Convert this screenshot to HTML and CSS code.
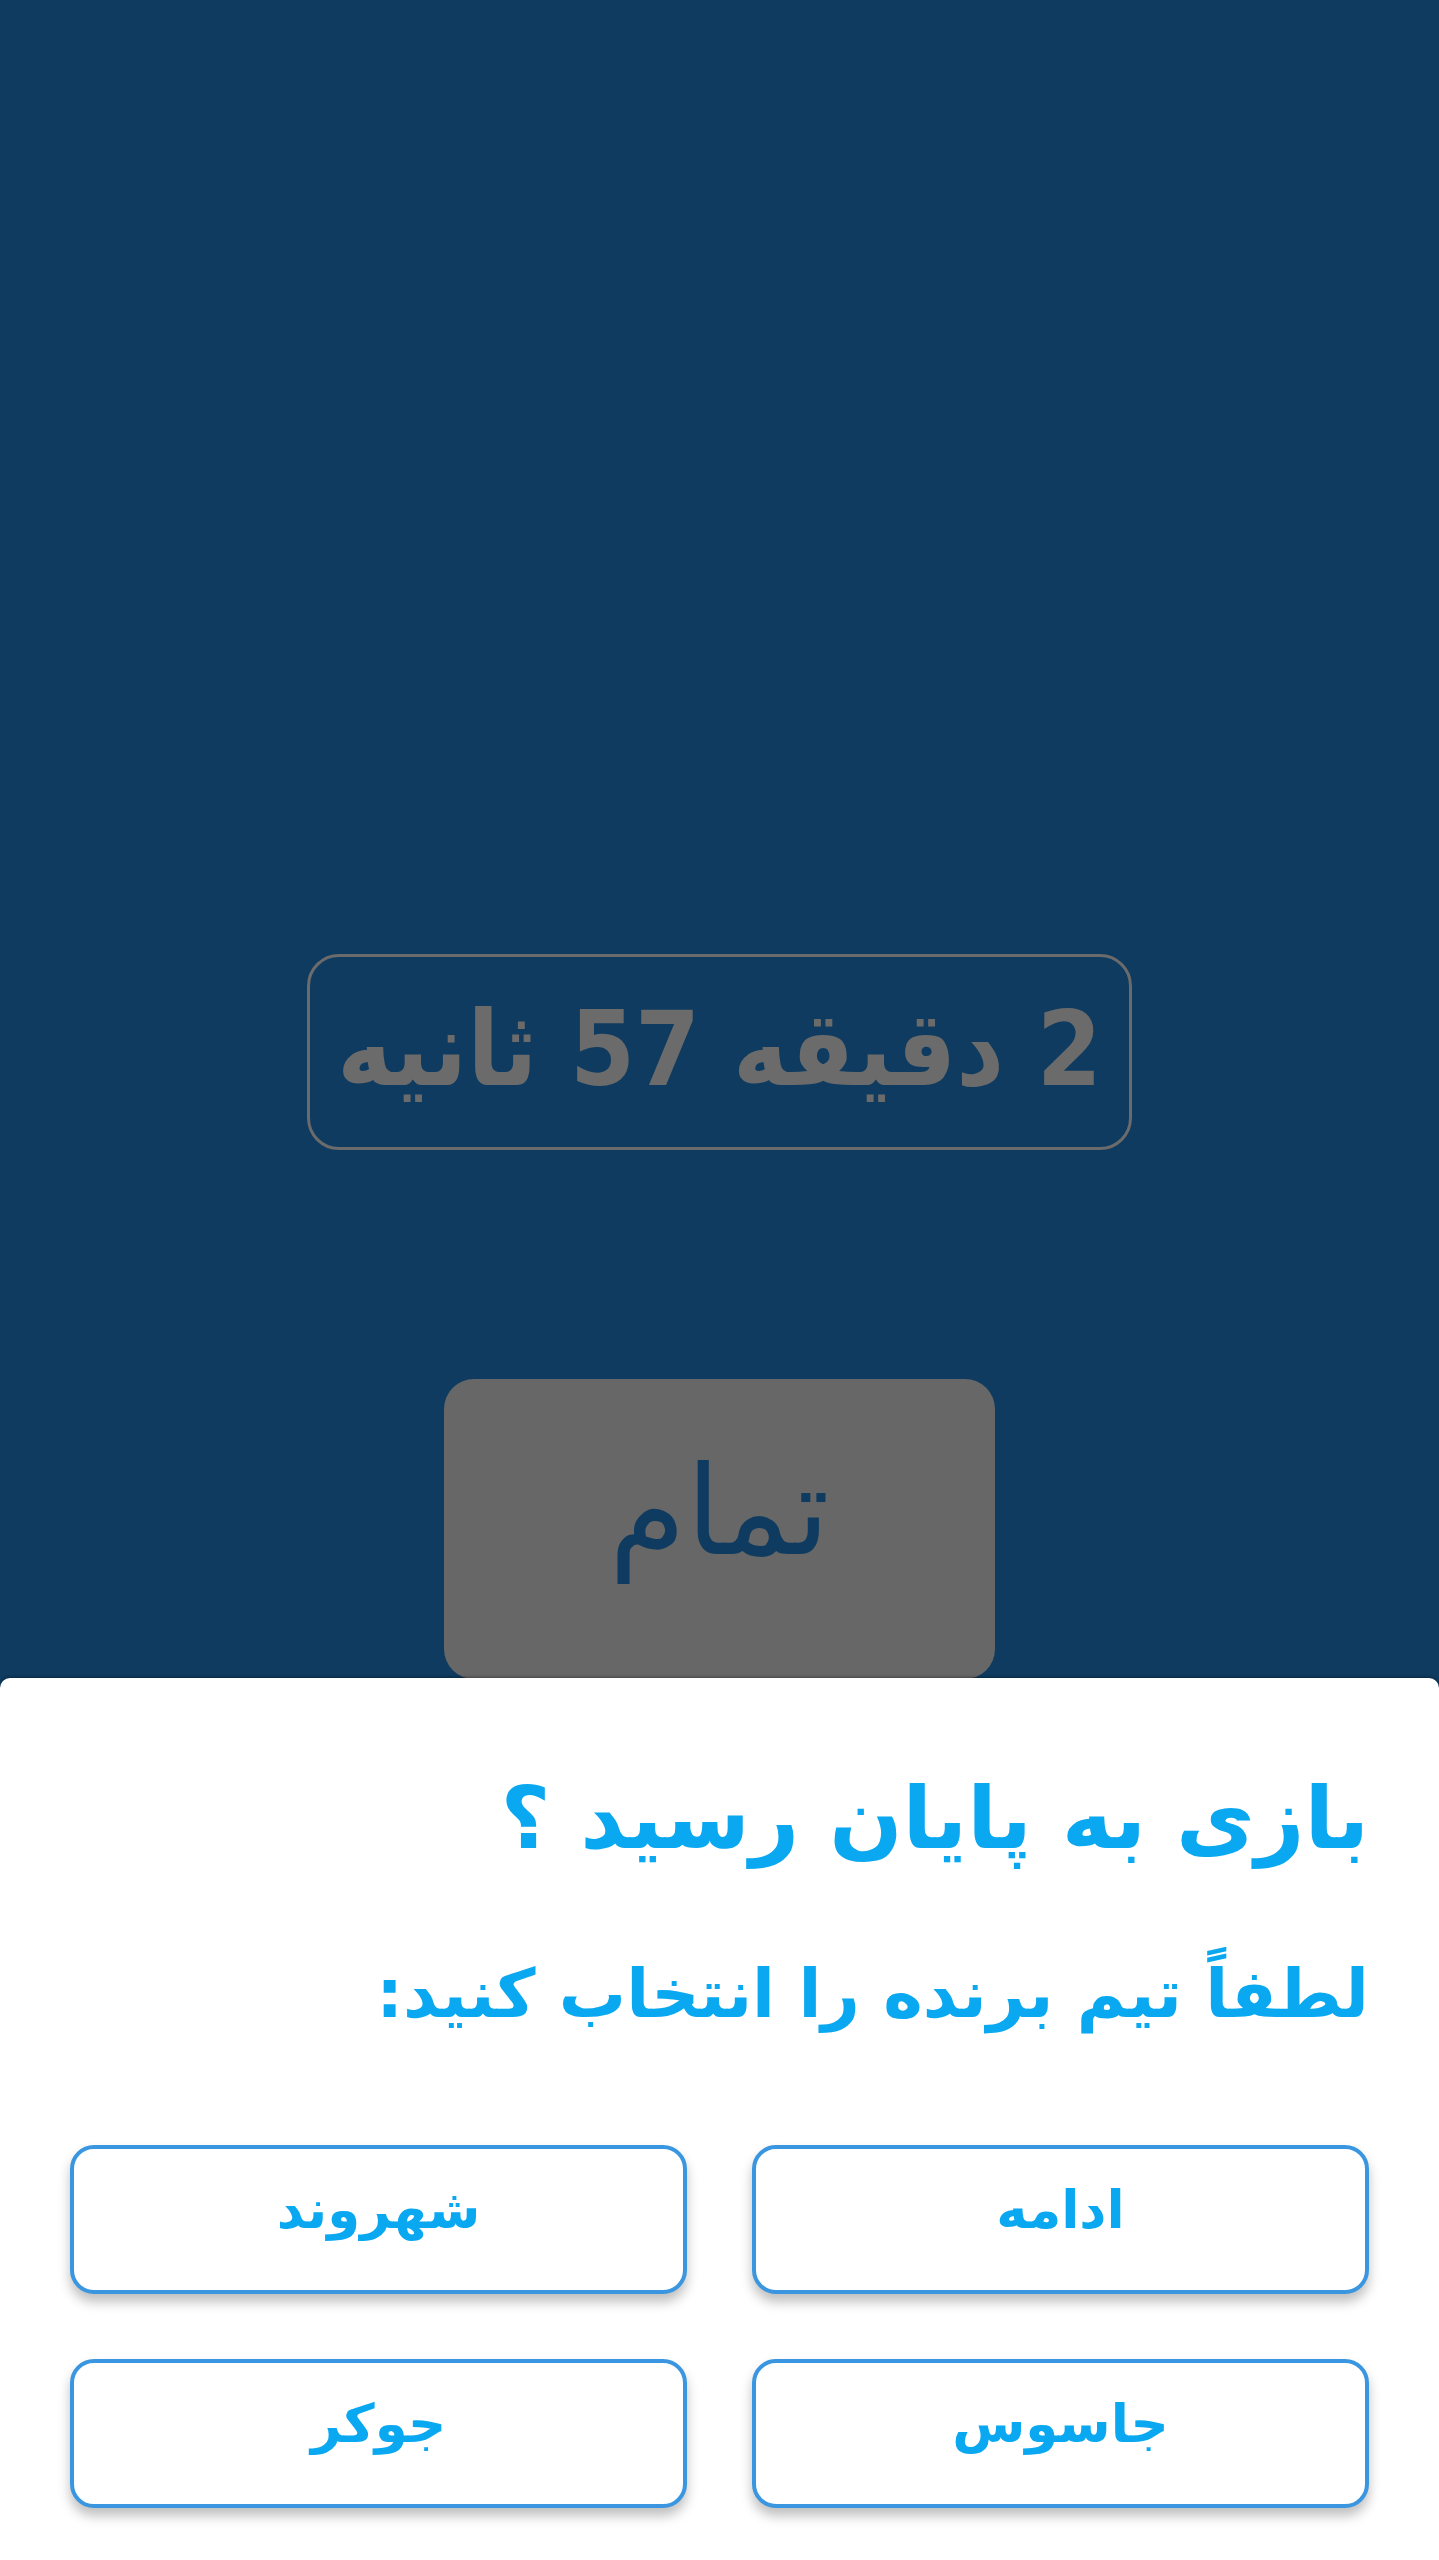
FILE: index.html
```html
<!DOCTYPE html>
<html lang="fa" dir="rtl">
<head>
<meta charset="utf-8">
<title>پایان بازی</title>
<link rel="stylesheet" href="styles.css">
</head>
<body>
<main class="game">
  <div class="timer">2 دقیقه 57 ثانیه</div>
  <button class="finish">تمام</button>
</main>
<section class="sheet">
  <h1 class="sheet-title">بازی به پایان رسید ؟</h1>
  <p class="sheet-sub">لطفاً تیم برنده را انتخاب کنید:</p>
  <div class="choices">
    <button class="choice">ادامه</button>
    <button class="choice">شهروند</button>
    <button class="choice">جاسوس</button>
    <button class="choice">جوکر</button>
  </div>
</section>
</body>
</html>
```
FILE: styles.css
```css
html, body {
  margin: 0;
  padding: 0;
}
body {
  width: 1439px;
  height: 2560px;
  background: #0e3b5f;
  font-family: "DejaVu Sans", sans-serif;
  overflow: hidden;
  position: relative;
}
.game {
  display: flex;
  flex-direction: column;
  align-items: center;
  padding-top: 954px;
}
.timer {
  box-sizing: border-box;
  width: 825px;
  height: 196px;
  border: 3px solid #6b6b6b;
  border-radius: 32px;
  color: #6b6b6b;
  font-family: "DejaVu Sans Condensed", "DejaVu Sans", sans-serif;
  font-stretch: condensed;
  font-weight: bold;
  font-size: 104px;
  display: flex;
  align-items: center;
  justify-content: center;
  white-space: nowrap;
  padding-bottom: 6px;
}
.finish {
  margin-top: 229px;
  width: 551px;
  height: 300px;
  border: none;
  border-radius: 30px;
  background: #676767;
  color: #0e3b5f;
  font-family: "DejaVu Sans", sans-serif;
  font-size: 124px;
  padding: 0 0 36px 0;
}
.sheet {
  position: absolute;
  left: 0;
  right: 0;
  top: 1678px;
  bottom: 0;
  background: #ffffff;
  border-radius: 10px 10px 0 0;
  box-shadow: 0 -1px 3px rgba(0, 0, 0, 0.35);
  padding: 0 70px;
  box-sizing: border-box;
}
.sheet-title {
  margin: 0;
  padding-top: 80px;
  font-size: 86px;
  font-weight: bold;
  line-height: 120px;
  color: #0aa8f0;
}
.sheet-sub {
  margin: 0;
  padding-top: 66px;
  font-size: 67px;
  font-weight: bold;
  line-height: 100px;
  color: #0aa8f0;
}
.choices {
  margin-top: 101px;
  display: grid;
  grid-template-columns: 1fr 1fr;
  column-gap: 65px;
  row-gap: 65px;
}
.choice {
  height: 149px;
  background: #ffffff;
  border: 4px solid #3a96e0;
  border-radius: 24px;
  box-shadow: 0 8px 12px rgba(0, 0, 0, 0.25);
  color: #0aa8f0;
  font-family: "DejaVu Sans", sans-serif;
  font-size: 53px;
  font-weight: bold;
  padding: 0 0 20px 0;
}
```
